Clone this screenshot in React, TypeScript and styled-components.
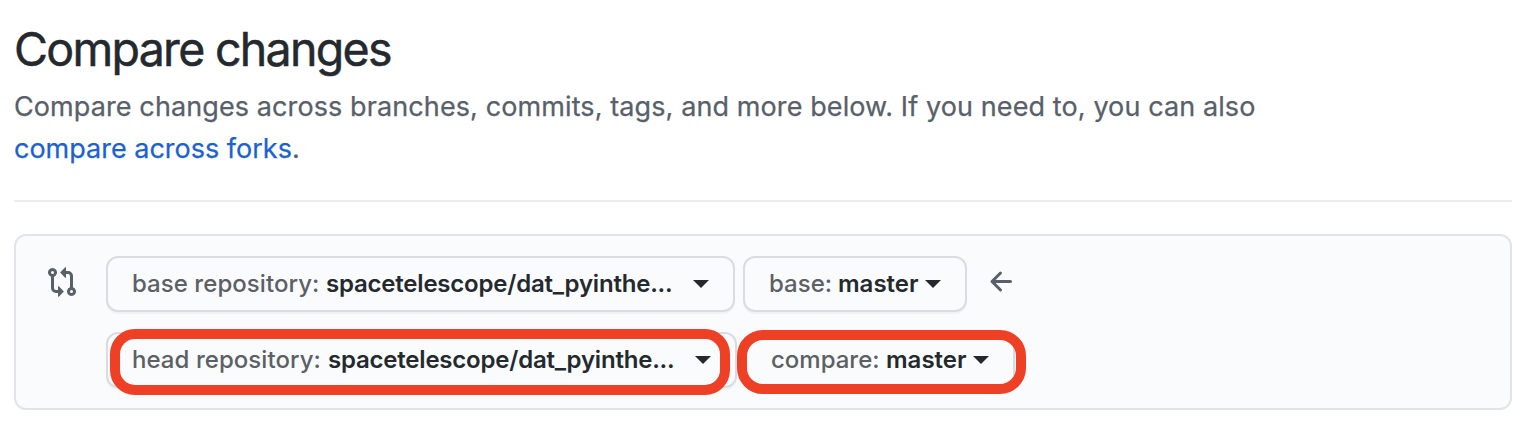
import React from "react";
import styled, { createGlobalStyle } from "styled-components";

const GlobalStyle = createGlobalStyle`
  body {
    margin: 0;
    background: #fff;
    color: #24292e;
    font-family: Inter, "Liberation Sans", sans-serif;
  }
`;

const Page = styled.main`
  box-sizing: border-box;
  height: 440px;
  padding: 19px 20px 0 14px;
  overflow: hidden;
`;

const Header = styled.header`
  box-sizing: border-box;
  height: 183px;
  border-bottom: 2px solid #eaecef;
  margin-bottom: 32px;
`;

const Title = styled.h1`
  margin: 0;
  font-size: 46.5px;
  font-weight: 400;
  line-height: 60px;
  letter-spacing: -1.7px;
  white-space: nowrap;
  -webkit-text-stroke: 0.5px #24292e;
`;

const Description = styled.p`
  margin: 7px 0 0;
  color: #586069;
  font-size: 27px;
  line-height: 42px;
  white-space: nowrap;
  -webkit-text-stroke: 0.25px currentColor;
`;

const Line = styled.span<{ $spacing: number }>`
  display: block;
  letter-spacing: ${(p) => p.$spacing}px;
`;

const Link = styled.a`
  color: #1b62d1;
  text-decoration: none;
  -webkit-text-stroke: 0.25px #1b62d1;
`;

const RangeEditor = styled.section`
  box-sizing: border-box;
  display: flex;
  align-items: flex-start;
  height: 176px;
  padding: 20px 30px;
  border: 2px solid #e1e4e8;
  border-radius: 12px;
  background: #fafbfc;
`;

const Icon = styled.svg`
  flex: none;
  width: 32px;
  height: 32px;
  fill: #586069;
`;

const CompareIcon = styled(Icon)`
  margin: 10px 28px 0 0;
`;

const ArrowIcon = styled(Icon)`
  margin: 10px 0 0 10.5px;
`;

const Rows = styled.div`
  display: flex;
  flex-direction: column;
  gap: 20px;
`;

const Row = styled.div`
  display: flex;
  gap: 8px;
  height: 56px;
`;

const Picker = styled.button<{ $width: number }>`
  position: relative;
  box-sizing: border-box;
  display: flex;
  align-items: center;
  width: ${(p) => p.$width}px;
  height: 56px;
  padding: 0 24px;
  border: 2px solid #dadcdf;
  border-radius: 12px;
  background: #fafbfc;
  box-shadow: 0 2px 0 rgba(27, 31, 35, 0.04);
  color: #24292e;
  font-family: inherit;
  font-size: 24px;
  font-weight: 600;
  line-height: 40px;
  text-align: left;
  white-space: nowrap;
`;

const Label = styled.span<{ $width: number; $spacing: number }>`
  flex: none;
  width: ${(p) => p.$width}px;
  color: #5c6065;
  font-weight: 500;
  letter-spacing: ${(p) => p.$spacing}px;
`;

const Value = styled.span<{ $width: number; $spacing: number }>`
  flex: none;
  width: ${(p) => p.$width}px;
  letter-spacing: ${(p) => p.$spacing}px;
`;

const Caret = styled.span`
  flex: none;
  border: 8px solid transparent;
  border-top-color: #24292e;
  border-bottom: 0;
`;

const Highlight = styled.span<{ $inset: string; $radius: number }>`
  position: absolute;
  z-index: 1;
  inset: ${(p) => p.$inset};
  border: 10px solid #ee4025;
  border-radius: ${(p) => p.$radius}px;
  pointer-events: none;
`;

type PickerProps = {
  width: number;
  label: string;
  labelWidth: number;
  labelSpacing: number;
  value: string;
  valueWidth: number;
  valueSpacing: number;
  children?: React.ReactNode;
};

function BranchPicker(p: PickerProps) {
  return (
    <Picker type="button" $width={p.width}>
      <Label $width={p.labelWidth} $spacing={p.labelSpacing}>{p.label}</Label>
      <Value $width={p.valueWidth} $spacing={p.valueSpacing}>{p.value}</Value>
      <Caret />
      {p.children}
    </Picker>
  );
}

export default function App() {
  return (
    <Page>
      <GlobalStyle />
      <Header>
        <Title>Compare changes</Title>
        <Description>
          <Line $spacing={0.1}>
            Compare changes across branches, commits, tags, and more below. If you need to, you can also
          </Line>
          <Line $spacing={0}>
            <Link>compare across forks</Link>.
          </Line>
        </Description>
      </Header>
      <RangeEditor>
        <CompareIcon viewBox="0 0 16 16">
          <path
            fillRule="evenodd"
            d="M9.573.677L7.177 3.073a.25.25 0 000 .354l2.396 2.396A.25.25 0 0010 5.646V4h1a1 1 0 011 1v5.628a2.251 2.251 0 101.5 0V5A2.5 2.5 0 0011 2.5h-1V.854a.25.25 0 00-.427-.177zM6 12v-1.646a.25.25 0 01.427-.177l2.396 2.396a.25.25 0 010 .354l-2.396 2.396A.25.25 0 016 15.146V13.5H5A2.5 2.5 0 012.5 11V5.372a2.25 2.25 0 111.5 0V11a1 1 0 001 1h1zm6.75 0a.75.75 0 100 1.5.75.75 0 000-1.5zM4 3.25a.75.75 0 11-1.5 0 .75.75 0 011.5 0z"
          />
        </CompareIcon>
        <Rows>
          <Row>
            <BranchPicker width={629} label="base repository:" labelWidth={194} labelSpacing={0.05} value="spacetelescope/dat_pyinthe..." valueWidth={367} valueSpacing={-0.21} />
            <BranchPicker width={224} label="base:" labelWidth={69} labelSpacing={0} value="master" valueWidth={87} valueSpacing={0} />
            <ArrowIcon viewBox="0 0 16 16">
              <path
                fillRule="evenodd"
                d="M7.78 12.53a.75.75 0 01-1.06 0L2.47 8.28a.75.75 0 010-1.06l4.25-4.25a.75.75 0 011.06 1.06L4.81 7h7.44a.75.75 0 010 1.5H4.81l2.97 2.97a.75.75 0 010 1.06z"
              />
            </ArrowIcon>
          </Row>
          <Row>
            <BranchPicker width={631} label="head repository:" labelWidth={196} labelSpacing={0.05} value="spacetelescope/dat_pyinthe..." valueWidth={367} valueSpacing={-0.21}>
              <Highlight $inset="-5px 5px -9px 2px" $radius={25} />
            </BranchPicker>
            <BranchPicker width={270} label="compare:" labelWidth={115} labelSpacing={0} value="master" valueWidth={87} valueSpacing={0}>
              <Highlight $inset="-4px -13px -8px -10px" $radius={26} />
            </BranchPicker>
          </Row>
        </Rows>
      </RangeEditor>
    </Page>
  );
}
